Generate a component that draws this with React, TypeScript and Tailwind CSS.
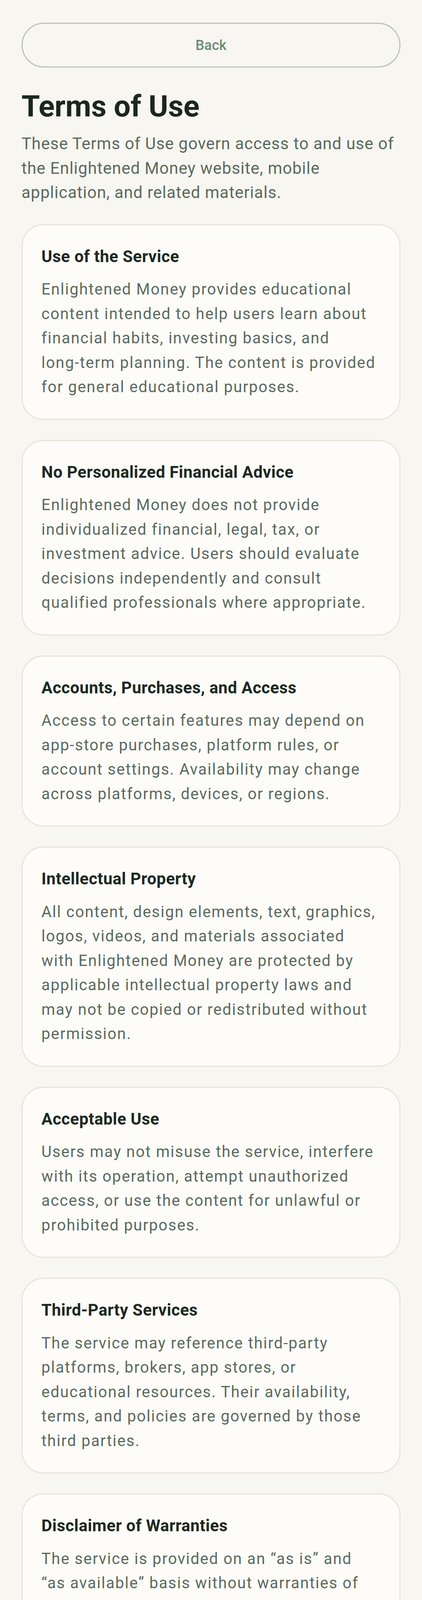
import { Fragment } from "react";

const sections = [
  {
    title: "Use of the Service",
    body: "Enlightened Money provides educational content intended to help users learn about financial habits, investing basics, and long-term planning. The content is provided for general educational purposes.",
  },
  {
    title: "No Personalized Financial Advice",
    body: "Enlightened Money does not provide individualized financial, legal, tax, or investment advice. Users should evaluate decisions independently and consult qualified professionals where appropriate.",
  },
  {
    title: "Accounts, Purchases, and Access",
    body: "Access to certain features may depend on app-store purchases, platform rules, or account settings. Availability may change across platforms, devices, or regions.",
  },
  {
    title: "Intellectual Property",
    body: "All content, design elements, text, graphics, logos, videos, and materials associated with Enlightened Money are protected by applicable intellectual property laws and may not be copied or redistributed without permission.",
  },
  {
    title: "Acceptable Use",
    body: "Users may not misuse the service, interfere with its operation, attempt unauthorized access, or use the content for unlawful or prohibited purposes.",
  },
  {
    title: "Third-Party Services",
    body: "The service may reference third-party platforms, brokers, app stores, or educational resources. Their availability, terms, and policies are governed by those third parties.",
  },
  {
    title: "Disclaimer of Warranties",
    body: "The service is provided on an \u201cas is\u201d and \u201cas available\u201d basis without warranties of any kind, to the fullest extent permitted by law.",
  },
  {
    title: "Limitation of Liability",
    body: "To the fullest extent permitted by law, Enlightened Money and its operators shall not be liable for indirect, incidental, special, or consequential damages arising from use of the service.",
  },
  {
    title: "Changes to the Terms",
    body: "These Terms of Use may be updated from time to time. Continued use of the service after updates are posted constitutes acceptance of the revised terms.",
  },
  {
    title: "Contact",
    body: "Questions regarding these Terms of Use may be directed to the publisher of Enlightened Money.",
  },
];

// keep hyphenated words on one line, like the app does
function NoHyphenBreak({ text }: { text: string }) {
  const parts = text.split(/(\S+-\S+)/);
  return (
    <>
      {parts.map((part, i) =>
        i % 2 === 1 ? (
          <span key={i} className="whitespace-nowrap">
            {part}
          </span>
        ) : (
          <Fragment key={i}>{part}</Fragment>
        )
      )}
    </>
  );
}

function SectionCard({ title, body }: { title: string; body: string }) {
  return (
    <section className="rounded-[56px] border-[3px] border-[#e9e4db] bg-[#fdfcf8] px-[48px] py-[49px]">
      <h2 className="text-[42px] font-bold leading-[62.5px] tracking-[0.5px] text-[#1e2922]">{title}</h2>
      <p className="mt-[22px] text-[40px] leading-[62.5px] tracking-[2px] text-[#5b6a5e]">
        <NoHyphenBreak text={body} />
      </p>
    </section>
  );
}

export default function App() {
  return (
    <div className="min-h-screen bg-[#f8f6f1] px-[55px] pt-[58px] pb-[16px] font-['Roboto','Liberation_Sans',sans-serif]">
      <button className="flex h-[115px] w-full items-center justify-center rounded-[58px] border-[3px] border-[#b9c5b8] text-[36px] font-medium text-[#6b8c72]">
        Back
      </button>

      <h1 className="mt-[54px] text-[76px] font-bold leading-[90px] text-[#1c261f]">Terms of Use</h1>
      <p className="mt-[20px] text-[42px] leading-[62.5px] tracking-[1px] text-[#5b6a5e]">
        These Terms of Use govern access to and use of the Enlightened Money website, mobile application, and related
        materials.
      </p>

      <div className="mt-[49px] flex flex-col gap-[51px]">
        {sections.map((s) => (
          <SectionCard key={s.title} title={s.title} body={s.body} />
        ))}
      </div>
    </div>
  );
}
